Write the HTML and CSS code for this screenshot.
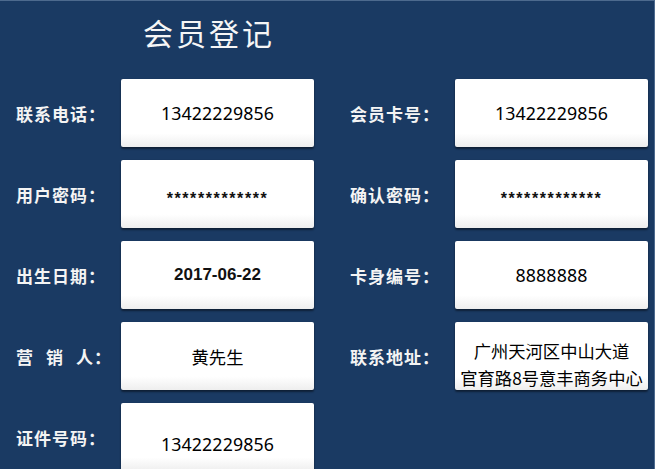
FILE: index.html
```html
<!DOCTYPE html>
<html lang="zh">
<head>
<meta charset="utf-8">
<title>会员登记</title>
<link rel="stylesheet" href="styles.css">
</head>
<body>
<div class="page">
  <h1 class="title">会员登记</h1>
  <div class="form">
    <div class="field">
      <div class="label">联系电话：</div>
      <div class="box num">13422229856</div>
    </div>
    <div class="field">
      <div class="label">会员卡号：</div>
      <div class="box num">13422229856</div>
    </div>
    <div class="field">
      <div class="label">用户密码：</div>
      <div class="box stars">*************</div>
    </div>
    <div class="field">
      <div class="label">确认密码：</div>
      <div class="box stars">*************</div>
    </div>
    <div class="field">
      <div class="label">出生日期：</div>
      <div class="box date">2017-06-22</div>
    </div>
    <div class="field">
      <div class="label">卡身编号：</div>
      <div class="box num">8888888</div>
    </div>
    <div class="field">
      <div class="label"><span class="sp">营销</span>人：</div>
      <div class="box cjk">黄先生</div>
    </div>
    <div class="field">
      <div class="label">联系地址：</div>
      <div class="box cjk addr">广州天河区中山大道<br>官育路8号意丰商务中心</div>
    </div>
    <div class="field">
      <div class="label">证件号码：</div>
      <div class="box num last">13422229856</div>
    </div>
  </div>
</div>
</body>
</html>
```

FILE: styles.css
```css
html, body {
  margin: 0;
  padding: 0;
}
body {
  background: #1a3a63;
}
.page {
  width: 654px;
  height: 468px;
  overflow: hidden;
  background: #1a3a63;
  border-top: 1px solid #4d6a8e;
  border-right: 1px solid #4d6a8e;
  font-family: "Noto Sans CJK SC", "Noto Sans", sans-serif;
  color: #f4f4f4;
}
.title {
  margin: 0;
  padding: 10px 0 0 143px;
  height: 68px;
  font-size: 30px;
  font-weight: normal;
  letter-spacing: 3px;
  line-height: 42px;
  color: #f6f6f6;
}
.form {
  display: grid;
  grid-template-columns: 298px 298px;
  column-gap: 36px;
  row-gap: 13px;
  padding-left: 16px;
}
.field {
  display: flex;
  align-items: center;
  height: 68px;
}
.label {
  width: 105px;
  flex: none;
  font-size: 17px;
  font-weight: bold;
  letter-spacing: 1px;
  white-space: nowrap;
}
.sp {
  letter-spacing: 13px;
}
.box {
  flex: 1;
  height: 68px;
  box-sizing: border-box;
  background: linear-gradient(#ffffff 0%, #ffffff 80%, #eeeeee 100%);
  border-radius: 2px;
  box-shadow: 0 2px 2px rgba(0, 0, 0, 0.45), 0 0 1px rgba(0, 0, 0, 0.3);
  color: #111;
  display: flex;
  align-items: center;
  justify-content: center;
  text-align: center;
  white-space: nowrap;
}
.num {
  font-family: "Noto Sans", "Noto Sans CJK SC", sans-serif;
  font-size: 17.8px;
  color: #000;
  letter-spacing: 0.1px;
}
.stars {
  font-family: "Liberation Sans", sans-serif;
  font-weight: bold;
  font-size: 16px;
  letter-spacing: 1.6px;
  padding-top: 10px;
}
.date {
  font-family: "Liberation Sans", sans-serif;
  font-weight: bold;
  font-size: 17px;
}
.cjk {
  font-family: "Noto Sans CJK SC", sans-serif;
  font-size: 17.3px;
  font-weight: normal;
  color: #000;
}
.addr {
  line-height: 27px;
  padding-top: 16px;
  letter-spacing: 0;
}
.last {
  padding-top: 14px;
}
```
